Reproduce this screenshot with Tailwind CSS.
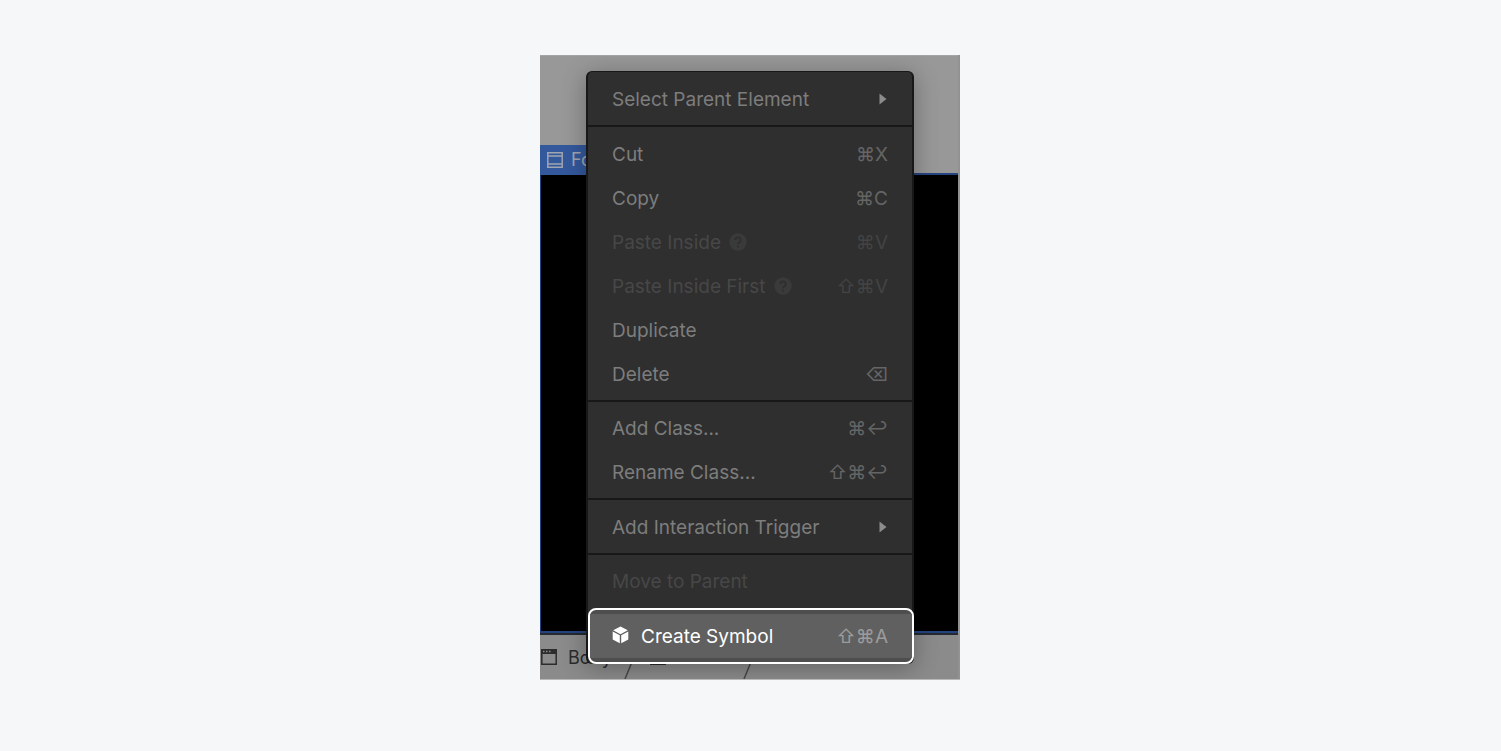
<!DOCTYPE html>
<html lang="en">
<head>
    <meta charset="utf-8" />
    <meta name="viewport" content="width=device-width, initial-scale=1.0" />
    <title>Create Symbol</title>
    <script src="https://cdn.jsdelivr.net/npm/@tailwindcss/browser@4"></script>
</head>
<body class="min-h-screen bg-[#f6f7f9] pt-[55px] pr-px pb-[70px] font-['Inter',sans-serif] text-[19px] leading-6">
    <main class="mx-auto grid w-full max-w-[420px] overflow-hidden border-b border-[#b8b8b8]">

        <!-- designer canvas -->
        <div class="col-start-1 row-start-1 flex flex-col bg-[#929292]">
            <div class="mr-[2px] flex flex-1 flex-col">
                <div class="h-[90px] border-t border-[#a4a4a4] bg-[#989898]"></div>
                <div class="flex h-[30px] items-end bg-[#989898]">
                    <div class="flex h-[30px] w-[47px] items-center gap-2 overflow-hidden bg-[#33589c] pl-[7px] text-[18px] text-[#a0a5b0]">
                        <svg class="size-4 shrink-0" viewBox="0 0 16 16" fill="none" stroke="currentColor" stroke-width="1.5"><path d="M.8.8h14.4v14.4H.8zM.8 4h14.4M.8 12h14.4" /></svg>
                        <span>Fo</span>
                    </div>
                    <div class="h-0.5 flex-1 bg-[#26447f]"></div>
                </div>
                <div class="flex-1 border-b-2 border-l border-[#234380] bg-black"></div>
                <nav class="flex h-[46px] items-center border-t-2 border-[#242a30] bg-[#8b8b8b] text-[18px] text-[#2c2c2c]">
                    <svg class="ml-px size-4" viewBox="0 0 16 16" fill="none" stroke="currentColor" stroke-width="1.5"><path d="M.8.8h14.4v14.4H.8z" /><path d="M0 0h16v5H0z" fill="currentColor" stroke="none" /><path d="M2 2.5h1.5M5 2.5h1.5M8 2.5h1.5" stroke="#8b8b8b" /></svg>
                    <span class="ml-[11px] w-[46px] pt-0.5">Body</span>
                    <svg class="h-11 w-5" viewBox="0 0 20 44" fill="none" stroke="#484848" stroke-width="1.5"><path d="M20 22L11 44" /></svg>
                    <svg class="ml-4 size-4" viewBox="0 0 16 16" fill="none" stroke="currentColor" stroke-width="1.5"><path d="M.8.8h14.4v14.4H.8zM.8 4h14.4M.8 12h14.4" /></svg>
                    <svg class="ml-[69px] h-11 w-5" viewBox="0 0 20 44" fill="none" stroke="#484848" stroke-width="1.5"><path d="M18 22L9 44" /></svg>
                </nav>
            </div>
        </div>

        <!-- context menu -->
        <div role="menu" class="relative col-start-1 row-start-1 mx-[46px] mt-4 mb-[15px] flex flex-col rounded-md border-x-2 border-t border-[#181818] bg-[#2f2f2f] text-[#7d7d7d] shadow-[0_4px_24px_rgba(0,0,0,0.3)]">
            <div class="border-b-2 border-[#181818] pt-[5px] pb-1">
                <button role="menuitem" class="flex h-11 w-full items-center justify-between px-6 pt-0.5">
                    <span>Select Parent Element</span>
                    <svg class="mr-px mb-0.5 h-3 w-2" viewBox="0 0 8 12" fill="#8c8c8c"><path d="M.5.5L7.5 6L.5 11.5z" /></svg>
                </button>
            </div>
            <div class="border-b-2 border-[#181818] pt-[5px] pb-1">
                <button role="menuitem" class="flex h-11 w-full items-center justify-between px-6 pt-0.5">
                    <span>Cut</span>
                    <span class="text-[#656565]">⌘X</span>
                </button>
                <button role="menuitem" class="flex h-11 w-full items-center justify-between px-6 pt-0.5">
                    <span>Copy</span>
                    <span class="text-[#656565]">⌘C</span>
                </button>
                <button role="menuitem" disabled class="flex h-11 w-full items-center justify-between px-6 pt-0.5 text-[#474747]">
                    <span class="flex items-center gap-2">
                        Paste Inside
                        <svg class="mb-0.5 size-[18px]" viewBox="0 0 18 18" fill="none"><circle cx="9" cy="9" r="8.7" fill="#3a3a3a" /><path d="M6.3 7a2.7 2.6 0 1 1 4 2.3c-.9.5-1.3.9-1.3 1.9M9 12.7v1.9" stroke="#2f2f2f" stroke-width="1.9" /></svg>
                    </span>
                    <span class="text-[#434343]">⌘V</span>
                </button>
                <button role="menuitem" disabled class="flex h-11 w-full items-center justify-between px-6 pt-0.5 text-[#474747]">
                    <span class="flex items-center gap-2">
                        Paste Inside First
                        <svg class="mb-0.5 size-[18px]" viewBox="0 0 18 18" fill="none"><circle cx="9" cy="9" r="8.7" fill="#3a3a3a" /><path d="M6.3 7a2.7 2.6 0 1 1 4 2.3c-.9.5-1.3.9-1.3 1.9M9 12.7v1.9" stroke="#2f2f2f" stroke-width="1.9" /></svg>
                    </span>
                    <span class="text-[#434343]">⇧⌘V</span>
                </button>
                <button role="menuitem" class="flex h-11 w-full items-center justify-between px-6 pt-0.5">
                    <span>Duplicate</span>
                </button>
                <button role="menuitem" class="flex h-11 w-full items-center justify-between px-6 pt-0.5">
                    <span>Delete</span>
                    <span class="text-[#656565]">⌫</span>
                </button>
            </div>
            <div class="border-b-2 border-[#181818] py-1">
                <button role="menuitem" class="flex h-11 w-full items-center justify-between px-6 pt-0.5">
                    <span>Add Class...</span>
                    <span class="text-[#656565]">⌘↩</span>
                </button>
                <button role="menuitem" class="flex h-11 w-full items-center justify-between px-6 pt-0.5">
                    <span>Rename Class...</span>
                    <span class="text-[#656565]">⇧⌘↩</span>
                </button>
            </div>
            <div class="border-b-2 border-[#181818] pt-[5px] pb-1">
                <button role="menuitem" class="flex h-11 w-full items-center justify-between px-6 pt-0.5">
                    <span>Add Interaction Trigger</span>
                    <svg class="mr-px mb-0.5 h-3 w-2" viewBox="0 0 8 12" fill="#8c8c8c"><path d="M.5.5L7.5 6L.5 11.5z" /></svg>
                </button>
            </div>
            <div class="pt-1 pb-[5px]">
                <button role="menuitem" disabled class="flex h-11 w-full items-center justify-between px-6 pt-0.5 text-[#474747]">
                    <span>Move to Parent</span>
                </button>
            </div>
            <div class="-mr-[2px] rounded-lg border-2 border-white bg-[#4e4e4e] py-1">
                <button role="menuitem" class="flex h-11 w-full items-center justify-between bg-[#606060] pr-6 pl-[22px] pt-0.5 text-white">
                    <span class="flex items-center gap-3">
                        <svg class="mb-1 h-[18px] w-[17px]" viewBox="0 0 17 18" fill="currentColor"><path d="M8.5.5L15.8 4.3L8.5 8.2L1.2 4.3zM.7 5.5L7.8 9.3V17.3L.7 13.5zM16.3 5.5L9.2 9.3V17.3L16.3 13.5z" /></svg>
                        Create Symbol
                    </span>
                    <span class="text-[#9c9c9c]">⇧⌘A</span>
                </button>
            </div>
        </div>
    </main>
</body>
</html>
